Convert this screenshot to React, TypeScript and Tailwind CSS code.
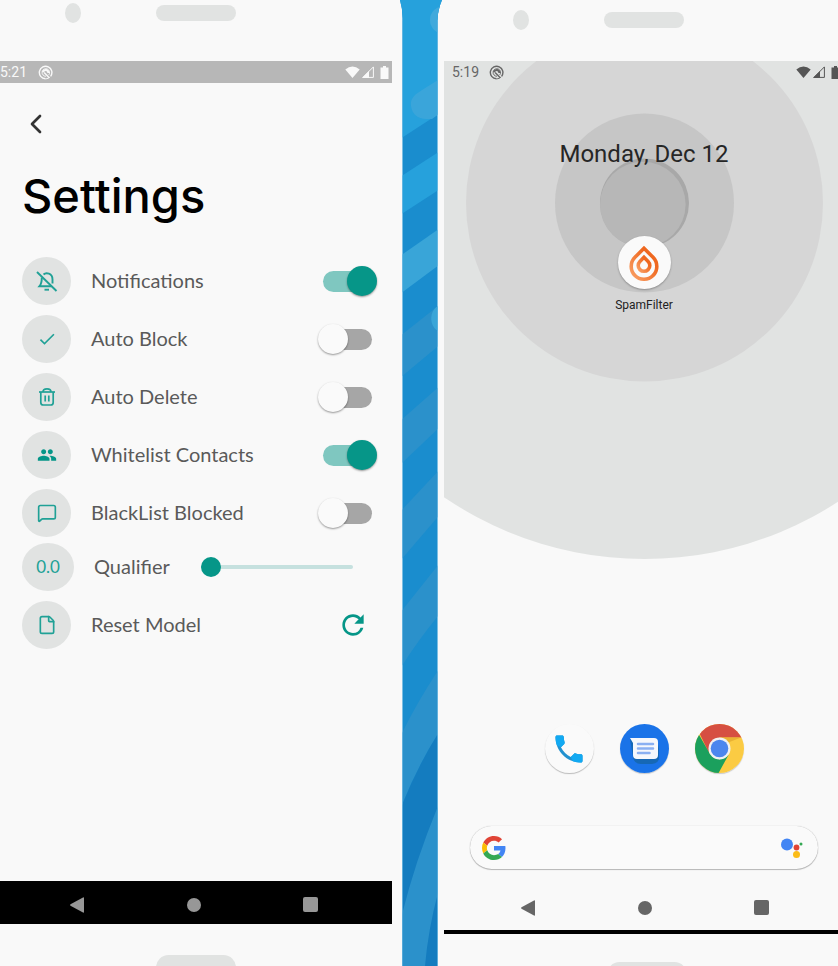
import type { ReactNode } from "react";
import { File, MessageSquare, ChevronLeft } from "lucide-react";
import { MdPeople, MdRefresh, MdCheck } from "react-icons/md";

/* ---------- Backdrop between the two phones ---------- */

function Stripes() {
  return (
    <svg viewBox="0 0 43 966" preserveAspectRatio="none" className="h-full w-[43px] shrink-0" aria-hidden="true">
      <defs>
        <clipPath id="gap">
          <path d="M0 0H42Q37 12 37.500 22V966H2.500V22Q3 10 0 0Z" />
        </clipPath>
      </defs>
      <g clipPath="url(#gap)">
        <rect width="43" height="966" fill="#1a8dce" />
        <path d="M0 0H43V111L0 139Z" fill="#26a1dc" />
        <circle cx="44" cy="20" r="14" fill="#40a9dc" />
        <path d="M43 77L22 90C14 95 10 99 11 106C12 114 18 119 26 119H32L43 111Z" fill="#3aa5da" />
        <path d="M0 177L43 149V187L0 215Z" fill="#26a1dc" />
        <path d="M0 256L43 226V262L0 294Z" fill="#39a5d8" />
        <path d="M0 336L43 302V342L0 378Z" fill="#2b91cb" />
        <path d="M38 306C29 311 29 326 38 331Z" fill="#39a5d8" />
        <path d="M0 421L43 383V424L0 465Z" fill="#2b91cb" />
        <path d="M0 512L43 466V511L0 561Z" fill="#2b91cb" />
        <path d="M0 613Q20 588 43 559V610Q18 640 0 669Z" fill="#2b91cb" />
        <path d="M0 737Q18 700 43 663V726Q18 764 0 810Z" fill="#2b91cb" />
        <path d="M0 810Q18 764 43 726V970H0Z" fill="#147cbf" />
        <path d="M0 923Q14 862 43 794V876Q29 920 25 966H0Z" fill="#2b91cb" />
        <path d="M2.500 20V966M37.500 20V966" stroke="#6fbbe2" fill="none" />
      </g>
    </svg>
  );
}

/* ---------- Shared phone parts ---------- */

function Bezel({ className }: { className: string }) {
  return (
    <div className={`h-[61px] shrink-0 ${className}`}>
      <div className="flex items-center">
        <div className="h-5 w-4 rounded-[50%] bg-[#e1e3e2]" />
        <div className="ml-[75px] h-4 w-20 rounded-full bg-[#e1e3e2]" />
      </div>
    </div>
  );
}

function DebugIcon() {
  return (
    <svg viewBox="0 0 16 16" className="size-[15px]" fill="none" stroke="currentColor" aria-hidden="true">
      <path d="M13.500 12A6.700 6.700 0 1 0 8 14.700" strokeWidth="1.500" />
      <path d="M8 14.700C10 14.700 12 14 13 12.500" strokeWidth="1" />
      <path d="M11.500 10.500A4 4 0 1 0 8.500 12" strokeWidth="1" />
      <path d="M5 7.500C7 4 11 5 11 8.500" strokeWidth="2" />
      <path d="M6.500 8L12 13.500" strokeWidth="1.500" />
    </svg>
  );
}

function SystemIcons() {
  return (
    <div className="flex items-center gap-[2px]">
      <svg viewBox="0 0 15 12" className="h-3 w-[15px]" fill="currentColor" aria-hidden="true">
        <path d="M0.300 3.400Q7.500 -2.600 14.700 3.400L7.500 12Z" />
      </svg>
      <svg viewBox="0 0 12 12" className="size-3" fill="currentColor" aria-hidden="true">
        <path d="M11.400 0.900V11.400H0.900Z" fill="none" stroke="currentColor" />
        <path d="M0 12L7 5V12Z" />
      </svg>
      <svg viewBox="0 0 9 13" className="ml-1 h-[13px] w-[9px]" fill="currentColor" aria-hidden="true">
        <path d="M3 0H6V1.500H8.500V13H0.500V1.500H3Z" />
      </svg>
    </div>
  );
}

function NavBar({ className }: { className: string }) {
  return (
    <nav className={`flex shrink-0 items-center ${className}`}>
      <button aria-label="Back">
        <svg viewBox="0 0 16 16" className="size-4" fill="currentColor" aria-hidden="true">
          <path d="M1.500 7.300L14 0.400Q15 0 15 1V15Q15 16 14 15.600L1.500 8.700Q0.500 8 1.500 7.300Z" />
        </svg>
      </button>
      <button aria-label="Home" className="size-[14px] rounded-full bg-current" />
      <button aria-label="Recent apps" className="size-[15px] rounded-[2px] bg-current" />
    </nav>
  );
}

/* ---------- Settings phone ---------- */

function BellOff() {
  return (
    <svg viewBox="0 0 24 24" className="size-6" fill="none" stroke="currentColor" strokeWidth="1.900" aria-hidden="true">
      <path d="M2 3L21.500 22" />
      <path d="M8.500 5.500C11 3.200 17.500 4 17.500 10.500V14.500" />
      <path d="M6.800 8.500C6.800 12.500 6.500 15 4.500 17.200H16.500" />
      <path d="M9.500 20.700H14" />
    </svg>
  );
}

function Trash() {
  return (
    <svg viewBox="0 0 20 20" className="size-5" fill="none" stroke="currentColor" strokeWidth="1.700" aria-hidden="true">
      <path d="M2 5H18" />
      <path d="M6 5C6 0.900 14 0.900 14 5" />
      <path d="M3.800 5V15.500Q3.800 18 6.300 18H13.700Q16.200 18 16.200 15.500V5" />
      <path d="M8.200 8.500V14.500M11.800 8.500V14.500" />
    </svg>
  );
}

function Badge({ wide, children }: { wide?: boolean; children: ReactNode }) {
  return (
    <span
      className={`flex h-12 shrink-0 items-center justify-center rounded-[50%] bg-[#e1e3e2] text-[#20a196] ${wide ? "w-[52px]" : "w-[49px]"}`}
    >
      {children}
    </span>
  );
}

const labelText = "ml-5 pb-0.5 text-[20px] leading-6 text-[#5a5a5a]";

function SwitchRow({ icon, label, on }: { icon: ReactNode; label: string; on?: boolean }) {
  return (
    <label className="flex items-center">
      <Badge>{icon}</Badge>
      <span className={labelText}>{label}</span>
      <input
        type="checkbox"
        role="switch"
        defaultChecked={on}
        className="relative ml-auto flex h-8 w-[59px] shrink-0 appearance-none items-center before:mx-auto before:h-[21px] before:w-[49px] before:rounded-full before:bg-[#a6a6a6] after:absolute after:left-0 after:size-[30px] after:rounded-full after:bg-[#fafafa] after:shadow-[0_1px_2px_rgba(0,0,0,0.4)] checked:before:bg-[#7fc7c0] checked:after:right-0 checked:after:left-auto checked:after:bg-[#069688]"
      />
    </label>
  );
}

function SettingsPhone() {
  return (
    <section className="flex min-w-0 flex-col overflow-hidden bg-[#f9f9f9] pr-[10px]">
      <Bezel className="pt-[3px] pl-[65px]" />
      <div className="flex h-[22px] shrink-0 items-center bg-[#b7b7b7] pr-[3px] font-['Roboto',sans-serif] text-[14px] text-[#f9f9f9]">
        <span className="mr-auto flex items-center gap-[11px]">
          5:21
          <DebugIcon />
        </span>
        <SystemIcons />
      </div>
      <main className="flex flex-1 flex-col pr-[15px] pl-[22px] font-['Lato',sans-serif]">
        <button aria-label="Back" className="mt-[27px] flex size-7 items-center justify-center text-[#333]">
          <ChevronLeft className="size-8 shrink-0" strokeWidth={2} />
        </button>
        <h1 className="mt-[30px] font-['Inter',sans-serif] text-[47px] leading-[56px] font-medium text-black">
          Settings
        </h1>
        <div className="mt-[33px] flex flex-col gap-[10px]">
          <SwitchRow icon={<BellOff />} label="Notifications" on />
          <SwitchRow icon={<MdCheck className="size-5" />} label="Auto Block" />
          <SwitchRow icon={<Trash />} label="Auto Delete" />
          <SwitchRow icon={<MdPeople className="size-5 text-[#069688]" />} label="Whitelist Contacts" on />
          <SwitchRow icon={<MessageSquare className="size-5" />} label="BlackList Blocked" />
        </div>
        <label className="mt-[6px] flex items-center">
          <Badge wide>
            <span className="text-[17px]">0.0</span>
          </Badge>
          <span className={labelText}>Qualifier</span>
          <input
            type="range"
            min={0}
            max={1}
            step={0.1}
            defaultValue={0}
            className="mr-6 ml-auto h-5 w-[152px] appearance-none bg-transparent [&::-webkit-slider-runnable-track]:h-1 [&::-webkit-slider-runnable-track]:rounded-full [&::-webkit-slider-runnable-track]:bg-[#c6e1df] [&::-webkit-slider-thumb]:-mt-2 [&::-webkit-slider-thumb]:size-5 [&::-webkit-slider-thumb]:appearance-none [&::-webkit-slider-thumb]:rounded-full [&::-webkit-slider-thumb]:bg-[#069688]"
          />
        </label>
        <div className="mt-[10px] flex items-center">
          <Badge>
            <File className="size-5" />
          </Badge>
          <span className={labelText}>Reset Model</span>
          <button aria-label="Reset model" className="mr-2 ml-auto text-[#069688]">
            <MdRefresh className="size-8" />
          </button>
        </div>
      </main>
      <NavBar className="h-[43px] gap-[102px] bg-black pt-1 pl-[69px] text-[#979797]" />
      <div className="mt-[31px] -mb-[14px] ml-[156px] h-[25px] w-20 shrink-0 rounded-full bg-[#e1e3e2]" />
    </section>
  );
}

/* ---------- Home screen phone ---------- */

function Wallpaper() {
  return (
    <svg
      viewBox="0 0 400 500"
      className="absolute top-0 left-0 h-[500px] w-full"
      preserveAspectRatio="xMidYMin slice"
      aria-hidden="true"
    >
      <circle cx="200.500" cy="142" r="356" fill="#e1e3e2" />
      <circle cx="200.500" cy="142" r="178.500" fill="#d6d6d6" />
      <circle cx="200.500" cy="142" r="89.500" fill="#c6c6c6" />
      <circle cx="200.500" cy="142" r="44.500" fill="#a8a8a8" />
      <circle cx="198.800" cy="143.500" r="42.800" fill="#b7b7b7" />
    </svg>
  );
}

function FlameDrop() {
  return (
    <svg viewBox="0 0 30 36" className="h-9 w-[30px]" fill="none" aria-hidden="true">
      <defs>
        <linearGradient id="flame" x1="1" y1="0" x2="0" y2="1">
          <stop offset="0.300" stopColor="#ef6820" />
          <stop offset="1" stopColor="#f9a066" />
        </linearGradient>
      </defs>
      <path
        d="M15 3.300L5.950 12.350A12.800 12.800 0 1 0 24.050 12.350Z"
        stroke="url(#flame)"
        strokeWidth="3.600"
      />
      <path
        d="M15 12.300L10.900 16.400A5.800 5.800 0 1 0 19.100 16.400Z"
        stroke="url(#flame)"
        strokeWidth="3.600"
      />
    </svg>
  );
}

function PhoneLogo() {
  return (
    <svg viewBox="0 0 24 24" className="size-9" aria-hidden="true">
      <path
        fill="#2291cf"
        d="M6.620 10.790c1.440 2.830 3.760 5.140 6.590 6.590l2.200-2.200c.27-.27.67-.36 1.020-.24 1.120.37 2.330.57 3.570.57.55 0 1 .45 1 1V20c0 .55-.45 1-1 1-9.390 0-17-7.610-17-17 0-.55.45-1 1-1h3.500c.55 0 1 .45 1 1 0 1.250.2 2.450.57 3.570.11.35.03.74-.25 1.020l-2.200 2.200z"
      />
      <path
        fill="#12a9f2"
        d="M3.900 9.500L6.620 10.790L8.820 8.590C9.100 8.310 9.180 7.920 9.070 7.570C8.700 6.450 8.500 5.250 8.500 4C8.500 3.450 8.050 3 7.500 3H4C3.450 3 3 3.450 3 4C3 6 3.300 7.800 3.900 9.500ZM14.500 20.100L13.210 17.380L15.410 15.180C15.680 14.910 16.080 14.820 16.430 14.940C17.550 15.310 18.760 15.510 20 15.510C20.550 15.510 21 15.960 21 16.510V20C21 20.550 20.550 21 20 21C18 21 16.200 20.700 14.500 20.100Z"
      />
    </svg>
  );
}

function MessagesLogo() {
  return (
    <svg viewBox="0 0 49 49" className="size-[49px]" aria-hidden="true">
      <circle cx="24.500" cy="24.500" r="24.500" fill="#1a73e8" />
      <path d="M10 15L13 33Q14 40 21 40H32Q39 39 39 34V20L36 34Z" fill="#1668b5" />
      <path d="M10 14H34Q38 14 38 18V31Q38 35 34 35H17Q13 35 13 31V19Z" fill="#f6f8fc" />
      <path d="M18 20H33M18 24.500H33M18 29H29.500" stroke="#8ab0f2" strokeWidth="2.500" strokeLinecap="round" />
    </svg>
  );
}

function ChromeLogo() {
  return (
    <svg viewBox="0 0 49 49" className="size-[49px]" aria-hidden="true">
      <defs>
        <clipPath id="disc">
          <circle cx="24.500" cy="24.500" r="24.500" />
        </clipPath>
      </defs>
      <g clipPath="url(#disc)">
        <rect width="49" height="49" fill="#fbcb43" />
        <path d="M0 0H49V13.500H24.500L13.500 28Z" fill="#d64f42" />
        <path d="M0 5L5 12.500L15 30L24.500 35.500L33.500 31L23 50H0Z" fill="#1ba05d" />
        <path d="M24.500 13.500H46L32 19Z" fill="#e9b233" />
      </g>
      <circle cx="24.500" cy="24.500" r="11" fill="#f1f1f1" />
      <circle cx="24.500" cy="24.500" r="8.800" fill="#4c86ee" />
    </svg>
  );
}

function GoogleLogo() {
  return (
    <svg viewBox="0 0 48 48" className="size-6" aria-hidden="true">
      <path fill="#e04436" d="M24 9.500c3.540 0 6.710 1.220 9.210 3.600l6.850-6.850C35.900 2.380 30.470 0 24 0 14.620 0 6.510 5.380 2.560 13.220l7.980 6.190C12.430 13.720 17.740 9.500 24 9.500z" />
      <path fill="#4285f4" d="M46.980 24.550c0-1.570-.15-3.090-.38-4.550H24v9.020h12.940c-.58 2.960-2.260 5.480-4.780 7.180l7.730 6c4.510-4.180 7.090-10.360 7.090-17.650z" />
      <path fill="#fbbc05" d="M10.530 28.590c-.48-1.450-.76-2.990-.76-4.590s.27-3.140.76-4.590l-7.980-6.190C.92 16.460 0 20.120 0 24c0 3.880.92 7.540 2.560 10.780l7.970-6.190z" />
      <path fill="#34a853" d="M24 48c6.480 0 11.930-2.130 15.890-5.810l-7.730-6c-2.150 1.450-4.920 2.300-8.160 2.300-6.260 0-11.570-4.220-13.470-9.910l-7.980 6.190C6.510 42.620 14.620 48 24 48z" />
    </svg>
  );
}

function AssistantLogo() {
  return (
    <svg viewBox="0 0 24 24" className="size-6" aria-hidden="true">
      <circle cx="8" cy="8.500" r="6" fill="#4285f4" />
      <circle cx="17.500" cy="11.500" r="2.900" fill="#e04436" />
      <circle cx="17.500" cy="18.500" r="3.500" fill="#fbbc18" />
      <circle cx="22" cy="8" r="1.500" fill="#34a853" />
    </svg>
  );
}

function HomePhone() {
  return (
    <section className="flex min-w-0 flex-col overflow-hidden bg-[#f9f9f9] pl-[7px]">
      <Bezel className="pt-[10px] pl-[69px]" />
      <div className="relative -mr-[6px] flex flex-1 flex-col font-['Roboto',sans-serif]">
        <Wallpaper />
        <div className="relative flex h-[22px] shrink-0 items-center pr-1 pl-2 text-[14px] text-[#555]">
          <span className="mr-auto flex items-center gap-[10px] text-[#666]">
            5:19
            <DebugIcon />
          </span>
          <SystemIcons />
        </div>
        <main className="relative flex flex-1 flex-col items-center">
          <h2 className="mt-[54px] text-[24px] leading-[34px] text-[#262626]">Monday, Dec 12</h2>
          <button className="mt-[65px] flex flex-col items-center gap-2 text-[12px] leading-4 text-[#222]">
            <span className="flex size-[53px] items-center justify-center rounded-full bg-[#fafafa] shadow-[0_1px_2px_rgba(0,0,0,0.3)]">
              <FlameDrop />
            </span>
            SpamFilter
          </button>
          <div className="mt-auto flex gap-[26px]">
            <button
              aria-label="Phone"
              className="flex size-[49px] items-center justify-center rounded-full bg-[#fafafa] shadow-[0_1px_1px_rgba(0,0,0,0.25)]"
            >
              <PhoneLogo />
            </button>
            <button aria-label="Messages" className="rounded-full shadow-[0_1px_1px_rgba(0,0,0,0.2)]">
              <MessagesLogo />
            </button>
            <button aria-label="Chrome" className="rounded-full shadow-[0_1px_1px_rgba(0,0,0,0.2)]">
              <ChromeLogo />
            </button>
          </div>
          <form className="mx-[26px] mt-[53px] flex h-[43px] items-center self-stretch rounded-full bg-[#fafafa] pr-[15px] pl-3 shadow-[0_0_1px_rgba(0,0,0,0.3),0_1px_1px_rgba(0,0,0,0.25)]">
            <GoogleLogo />
            <input aria-label="Search" className="min-w-0 flex-1 bg-transparent px-2 outline-none" />
            <button type="button" aria-label="Assistant">
              <AssistantLogo />
            </button>
          </form>
        </main>
        <NavBar className="mt-4 h-[45px] gap-[102px] pl-[76px] text-[#666]" />
        <div className="h-1 shrink-0 bg-black" />
      </div>
      <div className="mt-7 -mb-[21px] ml-[163px] h-[25px] w-20 shrink-0 rounded-full bg-[#e1e3e2]" />
    </section>
  );
}

export default function App() {
  return (
    <div className="grid h-screen grid-cols-[minmax(0,402fr)_35px_minmax(0,401fr)] grid-rows-[minmax(0,1fr)] overflow-hidden bg-[#f9f9f9]">
      <SettingsPhone />
      {/* The artwork spills over both rounded phone corners. */}
      <div className="relative z-10 -mr-1.5 -ml-0.5 flex">
        <Stripes />
      </div>
      <HomePhone />
    </div>
  );
}
